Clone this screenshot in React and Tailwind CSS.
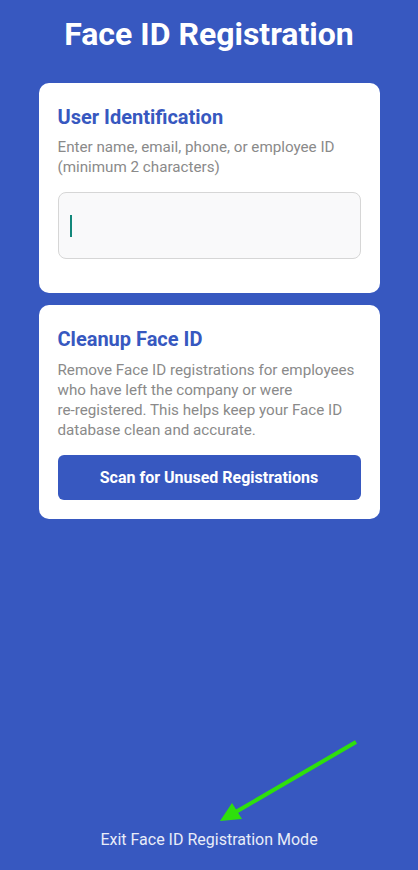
export default function App() {
  return (
    <div className="relative min-h-[870px] w-full bg-[#3758c0] flex flex-col items-center" style={{ fontFamily: 'Roboto, "Noto Sans", sans-serif' }}>
      <h1 className="mt-[14px] text-[32px] leading-[40px] font-bold text-white">Face ID Registration</h1>
      <div className="mt-[29px] w-[341px] bg-white rounded-[10px] px-[19px] pt-[20px] pb-[34px]">
        <h2 className="text-[20px] leading-[28px] font-bold text-[#3758c0]">User Identification</h2>
        <p className="mt-[6px] text-[15.2px] leading-[20px] text-[#8a8a8a]">Enter name, email, phone, or employee ID (minimum 2 characters)</p>
        <div className="mt-[15px] h-[67px] rounded-[8px] border border-[#d6d6d6] bg-[#f9f9fa] flex items-center pl-[11px]">
          <div className="w-[2px] h-[22px] bg-[#12877a]"></div>
        </div>
      </div>
      <div className="mt-[12px] w-[341px] bg-white rounded-[10px] px-[19px] pt-[20px] pb-[19px]">
        <h2 className="text-[20px] leading-[28px] font-bold text-[#3758c0]">Cleanup Face ID</h2>
        <p className="mt-[7px] text-[15.2px] leading-[20px] text-[#8a8a8a]">Remove Face ID registrations for employees who have left the company or were <span className="whitespace-nowrap">re-registered.</span> This helps keep your Face ID database clean and accurate.</p>
        <button className="mt-[15px] w-full h-[45px] rounded-[6px] bg-[#3758c0] text-white text-[16px] font-bold">Scan for Unused Registrations</button>
      </div>
      <div className="flex-1"></div>
      <div className="mb-[18px] text-[16px] leading-[24px] text-[#e8ecf8]">Exit Face ID Registration Mode</div>
      <svg className="absolute left-0 top-0 pointer-events-none" width="418" height="870" viewBox="0 0 418 870">
        <line x1="356" y1="742" x2="234" y2="813" stroke="#2ee00c" strokeWidth="4" />
        <polygon points="220,821 232,803 242,819" fill="#2ee00c" />
      </svg>
    </div>
  );
}
